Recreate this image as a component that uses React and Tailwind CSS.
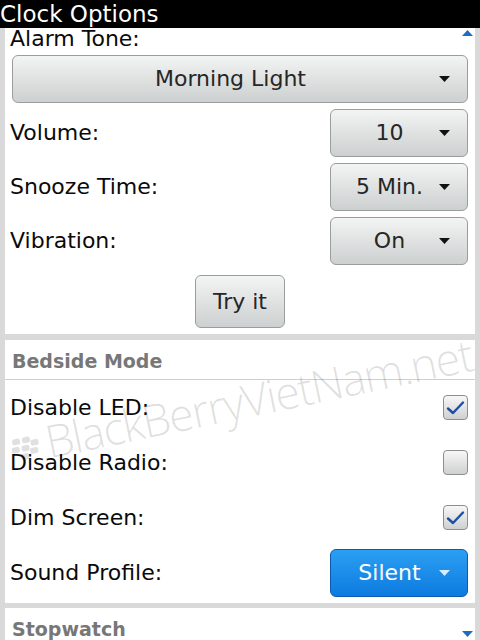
import React from 'react'

const font = { fontFamily: '"DejaVu Sans", "Liberation Sans", sans-serif' }

const Arrow = ({ color = '#111' }) => (
  <svg width="11" height="6" viewBox="0 0 11 6" className="shrink-0">
    <path d="M0 0 H11 L5.5 6 Z" fill={color} />
  </svg>
)

const Select = ({ value, wide = false, blue = false }) => (
  <div
    className={`flex h-[48px] items-center rounded-[6px] border ${wide ? 'w-full' : 'w-[138px]'} ${
      blue
        ? 'border-[#0b5cad] bg-gradient-to-b from-[#2b9ff2] to-[#0c7be0] text-white'
        : 'border-[#9b9d9d] bg-gradient-to-b from-[#f3f4f4] to-[#cdd0d0] text-[#262626]'
    }`}
  >
    <span className="flex-1 pl-[9px] text-center text-[22px] leading-none">{value}</span>
    <span className="mr-[17px]">
      <Arrow color={blue ? '#d8ecff' : '#111'} />
    </span>
  </div>
)

const Check = ({ checked }) => (
  <div className="flex h-[25px] w-[25px] items-center justify-center rounded-[4px] border border-[#8e8e8e] bg-gradient-to-b from-[#f7f7f7] to-[#cfd0d0]">
    {checked && (
      <svg width="19" height="16" viewBox="0 0 19 16">
        <path d="M2 8.5 L7 13 L17 2.5" fill="none" stroke="#1d4ea6" strokeWidth="2.4" strokeLinecap="round" strokeLinejoin="round" />
      </svg>
    )}
  </div>
)

const Row = ({ label, children, h = 'h-[48px]' }) => (
  <div className={`flex ${h} items-center justify-between pl-[5px] pr-[7px]`}>
    <span className="text-[22px] leading-none text-[#0a0a0a]">{label}</span>
    {children}
  </div>
)

const Header = ({ title }) => (
  <div className="border-b border-[#cfcfcf] pb-[4px] pl-[7px] pt-[10px]">
    <span className="text-[19px] font-bold leading-[22px] text-[#777]">{title}</span>
  </div>
)

export default function App() {
  return (
    <div className="relative h-[640px] w-[480px] overflow-hidden bg-[#d9d9d9]" style={font}>
      <div className="h-[28px] bg-black text-[23px] leading-[28px] text-white">Clock Options</div>

      <div className="mx-[5px] bg-white pb-[6px]">
        <div className="h-[22px] pl-[5px] text-[22px] leading-[22px] text-[#0a0a0a]">Alarm Tone:</div>
        <div className="mt-[5px] pl-[7px] pr-[7px]">
          <Select value="Morning Light" wide />
        </div>
        <div className="mt-[6px] flex flex-col gap-[6px]">
          <Row label="Volume:"><Select value="10" /></Row>
          <Row label="Snooze Time:"><Select value="5 Min." /></Row>
          <Row label="Vibration:"><Select value="On" /></Row>
        </div>
        <div className="mt-[10px] flex justify-center">
          <div className="flex h-[53px] w-[90px] items-center justify-center rounded-[6px] border border-[#9b9d9d] bg-gradient-to-b from-[#f3f4f4] to-[#cdd0d0] text-[22px] text-[#262626]">
            Try it
          </div>
        </div>
      </div>

      <div className="mx-[5px] mt-[6px] bg-white pb-[3px]">
        <Header title="Bedside Mode" />
        <div>
          <Row label="Disable LED:" h="h-[55px]"><Check checked /></Row>
          <Row label="Disable Radio:" h="h-[55px]"><Check /></Row>
          <Row label="Dim Screen:" h="h-[55px]"><Check checked /></Row>
          <Row label="Sound Profile:" h="h-[55px]"><Select value="Silent" blue /></Row>
        </div>
      </div>

      <div className="mx-[5px] mt-[5px] h-[40px] bg-white">
        <Header title="Stopwatch" />
      </div>

      {/* scroll indicators */}
      <svg className="absolute right-[7px] top-[30px]" width="11" height="6" viewBox="0 0 11 6">
        <path d="M0 6 H11 L5.5 0 Z" fill="#1e6fc4" />
      </svg>
      <svg className="absolute bottom-[3px] right-[7px]" width="11" height="6" viewBox="0 0 11 6">
        <path d="M0 0 H11 L5.5 6 Z" fill="#1e6fc4" />
      </svg>

      {/* watermark */}
      <div
        className="pointer-events-none absolute left-[14px] top-[426px] flex origin-bottom-left items-end gap-[5px] whitespace-nowrap text-[45px] font-light leading-none tracking-[-0.03em] text-black/[0.12]"
        style={{ fontFamily: '"Open Sans", sans-serif', transform: 'rotate(-11.7deg)' }}
      >
        <svg width="32" height="26" viewBox="0 0 32 26" className="mb-[7px]">
          {[[4, 2], [14, 2], [2, 10], [12, 10], [22, 6], [10, 18], [20, 14]].map(([x, y], i) => (
            <rect key={i} x={x} y={y} width="8" height="6" rx="2" fill="currentColor" />
          ))}
        </svg>
        <span>BlackBerryVietNam.net</span>
      </div>
    </div>
  )
}
